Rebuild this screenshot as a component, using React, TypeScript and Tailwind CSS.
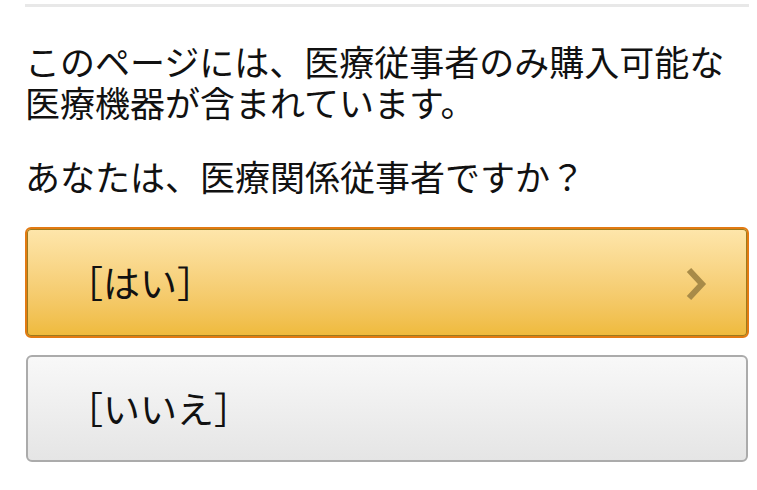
export default function App() {
  return (
    <div className="min-h-[490px] w-[757px] bg-white pl-[25px] pr-[8px] pt-[4px] text-[#111] [font-family:'Noto_Sans_CJK_JP','Noto_Sans',sans-serif]">
      <div className="h-[3px] w-full bg-[#e8e8e8]" />
      <p className="mt-[33px] text-[35px] leading-[41px]">
        このページには、医療従事者のみ購入可能な医療機器が含まれています。
      </p>
      <p className="mt-[33px] text-[35px] leading-[41px]">
        あなたは、医療関係従事者ですか？
      </p>
      <div className="mt-[31px] flex flex-col gap-[17px]">
        <button className="flex h-[111px] w-full items-center justify-between rounded-[6px] border-2 border-[#e27a12] bg-gradient-to-b from-[#fee6ab] to-[#efba3b] pl-[39px] pr-[38px] text-[37px] shadow-[inset_0_0_0_1px_#9c7a1c]">
          <span>［はい］</span>
          <svg width="24" height="34" viewBox="0 0 24 34" className="mt-[2px]">
            <path d="M4 3 L17 17 L4 31" fill="none" stroke="#a88b48" strokeWidth="6" />
          </svg>
        </button>
        <button className="mx-[1px] flex h-[107px] items-center rounded-[6px] border-2 border-[#ababab] bg-gradient-to-b from-[#f8f8f8] to-[#e5e5e5] pl-[38px] text-[37px]">
          <span>［いいえ］</span>
        </button>
      </div>
    </div>
  );
}
